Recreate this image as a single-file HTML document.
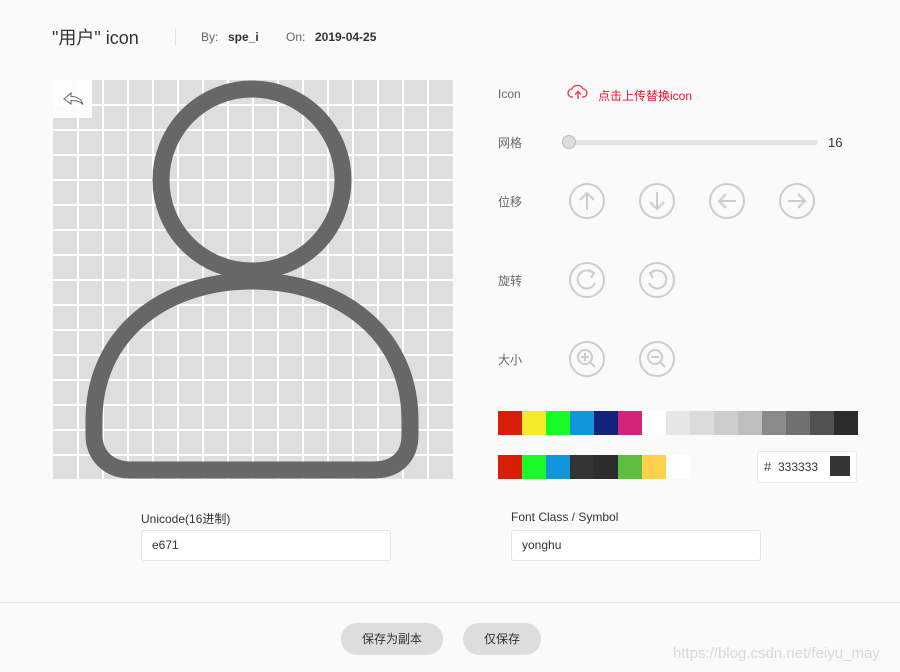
<!DOCTYPE html>
<html><head><meta charset="utf-8"><style>
*{margin:0;padding:0;box-sizing:border-box}
body{width:900px;height:672px;background:#fafafa;font-family:"Liberation Sans","Noto Sans CJK SC",sans-serif;position:relative;overflow:hidden;color:#333}
.a{position:absolute}
.lbl{font-size:12px;color:#666}
.sw{position:absolute;width:24px;height:24px}
input{font-family:inherit}
.inp{position:absolute;height:31px;width:250px;background:#fff;border:1px solid #e5e5e5;border-radius:3px;font-size:12px;padding-left:10px;line-height:29px;color:#333}
.btn{position:absolute;height:32px;top:623px;background:#ddd;border-radius:16px;font-size:12px;color:#333;text-align:center;line-height:32px}
</style></head><body>
<div class="a" style="left:52px;top:24px;font-size:18px;color:#333">"用户" icon</div>
<div class="a" style="left:175px;top:28px;width:1px;height:18px;background:#e5e5e5"></div>
<div class="a" style="left:201px;top:30px;font-size:12px;color:#666">By:</div>
<div class="a" style="left:228px;top:30px;font-size:12px;font-weight:bold;color:#333">spe_i</div>
<div class="a" style="left:286px;top:30px;font-size:12px;color:#666">On:</div>
<div class="a" style="left:315px;top:30px;font-size:12px;font-weight:bold;color:#333">2019-04-25</div>

<svg class="a" style="left:53px;top:80px" width="400" height="399" viewBox="0 0 400 399">
<rect width="400" height="399" fill="#dedede"/>
<g stroke="#fff" stroke-width="2">
<path d="M25 0V399M50 0V399M75 0V399M100 0V399M125 0V399M150 0V399M175 0V399M200 0V399M225 0V399M250 0V399M275 0V399M300 0V399M325 0V399M350 0V399M375 0V399"/>
<path d="M0 25H400M0 50H400M0 75H400M0 100H400M0 125H400M0 150H400M0 175H400M0 200H400M0 225H400M0 250H400M0 275H400M0 300H400M0 325H400M0 350H400M0 375H400"/>
</g>
<rect width="39" height="38" fill="#fff" opacity="0.9"/>
<path d="M11 19l7-6v3.5c6 0 10 2 12 8-3-3-6-4-12-4V24z" fill="none" stroke="#666" stroke-width="1"/>
<g fill="none" stroke="#666766" stroke-width="17">
<circle cx="199" cy="100" r="91"/>
<path d="M41 340C41 255 110 201 199 201S357 255 357 340V355C357 375 345 390 320 390H78C55 390 41 375 41 355Z"/>
</g>
</svg>

<div class="a lbl" style="left:498px;top:87px">Icon</div>
<svg class="a" style="left:567px;top:83px" width="22" height="18" viewBox="0 0 22 18"><path d="M6 14H5a4 4 0 0 1 0-8 6 6 0 0 1 11 0 4 4 0 0 1 0 8h-1M11 16V9M8 11.5l3-3 3 3" fill="none" stroke="#f2304a" stroke-width="1.3"/></svg>
<div class="a" style="left:598px;top:87px;font-size:12px;color:#f4102f">点击上传替换icon</div>

<div class="a lbl" style="left:498px;top:134px">网格</div>
<div class="a" style="left:563px;top:140px;width:255px;height:5px;border-radius:3px;background:#e3e3e3"></div>
<div class="a" style="left:562px;top:135px;width:14px;height:14px;border-radius:50%;background:#ddd;border:1px solid #bbb"></div>
<div class="a" style="left:828px;top:135px;font-size:13px;color:#333">16</div>

<div class="a lbl" style="left:498px;top:193px">位移</div>
<div class="a lbl" style="left:498px;top:272px">旋转</div>
<div class="a lbl" style="left:498px;top:351px">大小</div>
<svg class="a" style="left:560px;top:170px" width="280" height="220" viewBox="560 170 280 220">
<g fill="none" stroke="#cdcdcd" stroke-width="2">
<circle cx="587" cy="201" r="17"/><path d="M587 210v-17M580 200l7-7 7 7"/>
<circle cx="657" cy="201" r="17"/><path d="M657 192v17M650 202l7 7 7-7"/>
<circle cx="727" cy="201" r="17"/><path d="M736 201h-17M726 194l-7 7 7 7"/>
<circle cx="797" cy="201" r="17"/><path d="M788 201h17M798 194l7 7-7 7"/>
<circle cx="587" cy="280" r="17"/><path d="M593 273a9 9 0 1 0 2 10"/><path d="M589 270l5 3-3 5" />
<circle cx="657" cy="280" r="17"/><path d="M651 273a9 9 0 1 1-2 10"/><path d="M655 270l-5 3 3 5"/>
<circle cx="587" cy="359" r="17"/><circle cx="585" cy="357" r="7"/><path d="M590 362l5 5M585 353v8M581 357h8"/>
<circle cx="657" cy="359" r="17"/><circle cx="655" cy="357" r="7"/><path d="M660 362l5 5M651 357h8"/>
</g></svg>

<div class="sw" style="left:498px;top:411px;background:#d81e06"></div>
<div class="sw" style="left:522px;top:411px;background:#f4ea2a"></div>
<div class="sw" style="left:546px;top:411px;background:#1afa29"></div>
<div class="sw" style="left:570px;top:411px;background:#1296db"></div>
<div class="sw" style="left:594px;top:411px;background:#13227a"></div>
<div class="sw" style="left:618px;top:411px;background:#d4237a"></div>
<div class="sw" style="left:642px;top:411px;background:#ffffff"></div>
<div class="sw" style="left:666px;top:411px;background:#e6e6e6"></div>
<div class="sw" style="left:690px;top:411px;background:#dbdbdb"></div>
<div class="sw" style="left:714px;top:411px;background:#cdcdcd"></div>
<div class="sw" style="left:738px;top:411px;background:#bfbfbf"></div>
<div class="sw" style="left:762px;top:411px;background:#8a8a8a"></div>
<div class="sw" style="left:786px;top:411px;background:#707070"></div>
<div class="sw" style="left:810px;top:411px;background:#515151"></div>
<div class="sw" style="left:834px;top:411px;background:#2c2c2c"></div>

<div class="sw" style="left:498px;top:455px;background:#d81e06"></div>
<div class="sw" style="left:522px;top:455px;background:#1afa29"></div>
<div class="sw" style="left:546px;top:455px;background:#1296db"></div>
<div class="sw" style="left:570px;top:455px;background:#333333"></div>
<div class="sw" style="left:594px;top:455px;background:#2c2c2c"></div>
<div class="sw" style="left:618px;top:455px;background:#5dbe41"></div>
<div class="sw" style="left:642px;top:455px;background:#fed04b"></div>
<div class="sw" style="left:666px;top:455px;background:#ffffff"></div>

<div class="a" style="left:757px;top:451px;width:100px;height:32px;background:#fff;border:1px solid #e8e8e8;border-radius:3px"></div>
<div class="a" style="left:764px;top:459px;font-size:13px;color:#444">#</div>
<div class="a" style="left:778px;top:460px;font-size:12px;color:#333">333333</div>
<div class="a" style="left:830px;top:456px;width:20px;height:20px;background:#333"></div>

<div class="a lbl" style="left:141px;top:510px;color:#333">Unicode(16进制)</div>
<div class="inp" style="left:141px;top:530px">e671</div>
<div class="a lbl" style="left:511px;top:510px;color:#333">Font Class / Symbol</div>
<div class="inp" style="left:511px;top:530px">yonghu</div>

<div class="a" style="left:0;top:602px;width:900px;height:1px;background:#e5e5e5"></div>
<div class="btn" style="left:341px;width:102px">保存为副本</div>
<div class="btn" style="left:463px;width:78px">仅保存</div>
<div class="a" style="left:673px;top:645px;font-size:15px;color:#d8d8d8">https://blog.csdn.net/feiyu_may</div>
</body></html>
